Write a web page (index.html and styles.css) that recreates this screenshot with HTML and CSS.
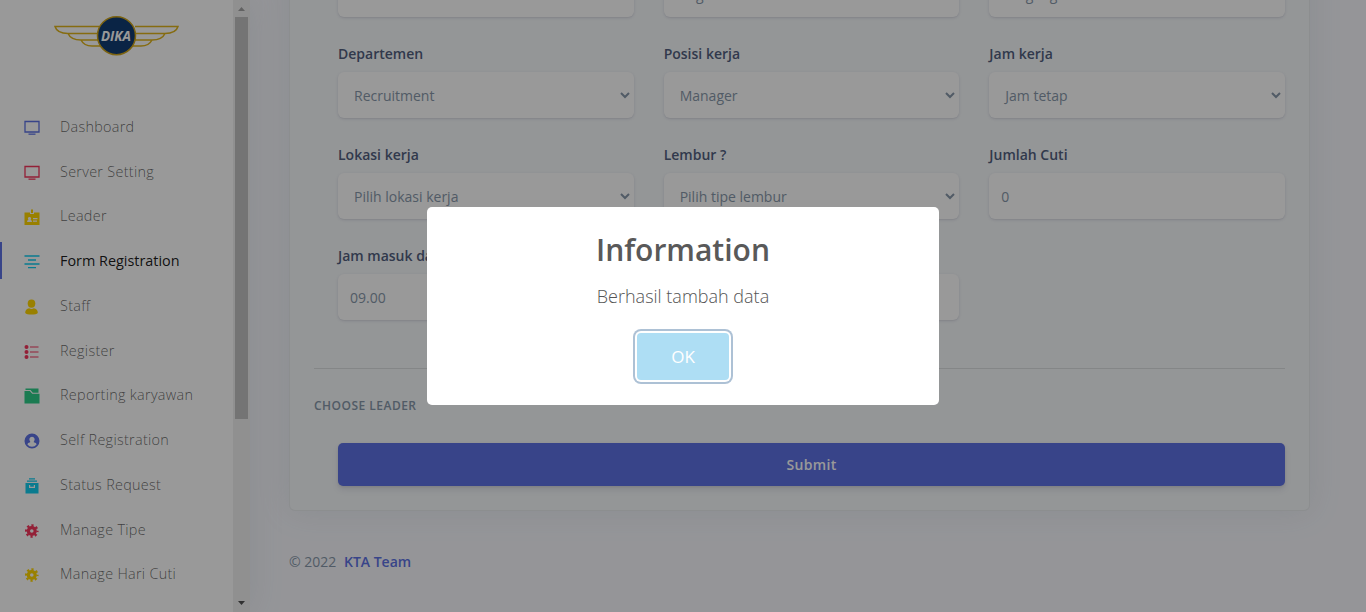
FILE: index.html
```html
<!DOCTYPE html>
<html lang="id">
<head>
<meta charset="utf-8">
<title>Form Registration</title>
<link rel="stylesheet" href="styles.css">
</head>
<body>
<div class="app">
  <aside class="sidebar">
    <div class="side-body">
      <div class="brand">
        <svg width="126" height="42" viewBox="0 0 126 42">
          <g fill="none" stroke="#dfb41c" stroke-width="1.5">
            <path d="M45 11.500H1c1.500 5 5 7 13 7H45M14 18.500c2 4.500 6 6.500 13 6.500H45M27 25c2 4 5 6 11 6h8"/>
            <path d="M81 11.500h43c-1.500 5-5 7-13 7H81M111 18.500c-2 4.500-6 6.500-13 6.500H81M98 25c-2 4-5 6-11 6h-8"/>
          </g>
          <circle cx="62.500" cy="20.700" r="19" fill="#123c73" stroke="#cfa51b" stroke-width="1.500"/>
          <text class="brand-text" x="62" y="26" text-anchor="middle" textLength="30" lengthAdjust="spacingAndGlyphs">DIKA</text>
        </svg>
      </div>
      <nav class="nav">
        <a class="nav-item"><svg class="ic primary" viewBox="0 0 16 16"><path class="line" d="M1 1.500h14v10.500H1z"/><path d="M4.500 13.500h7v1.300h-7z"/></svg><span>Dashboard</span></a>
        <a class="nav-item"><svg class="ic red" viewBox="0 0 16 16"><path class="line" d="M1 1.500h14v10.500H1z"/><path d="M4.500 13.500h7v1.300h-7z"/></svg><span>Server Setting</span></a>
        <a class="nav-item"><svg class="ic yellow" viewBox="0 0 16 16"><path fill-rule="evenodd" d="M.5 3.500H6V5h4V3.500h5.500V16H.5zM5.500 8a1.500 1.500 0 0 0-1 2.700Q3 11.300 3 13h5q0-1.700-1.500-2.300A1.500 1.500 0 0 0 5.500 8zM9 9v1.200h4.500V9zm0 2.500v1.200h4v-1.200z"/><path d="M7 .5h2V4H7z"/></svg><span>Leader</span></a>
        <a class="nav-item active"><svg class="ic info" viewBox="0 0 16 16"><path class="line" d="M.5 2h15M4 6h8M.5 10h15M4 13.700h8"/></svg><span>Form Registration</span></a>
        <a class="nav-item"><svg class="ic yellow" viewBox="0 0 16 16"><ellipse cx="7.500" cy="4.600" rx="3.800" ry="4.200"/><path d="M1.200 14c0-3 1.500-4.500 4-4.800q2.300 1.500 4.600 0c2.500.3 4 1.800 4 4.800q-1.500 1.500-6.300 1.500T1.200 14z"/></svg><span>Staff</span></a>
        <a class="nav-item"><svg class="ic red" viewBox="0 0 16 16"><circle cx="2.500" cy="3" r="2"/><circle cx="2.500" cy="8" r="2"/><circle cx="2.500" cy="13" r="2"/><path d="M6 2.400h8.500v1.200H6zM6 7.400h8.500v1.200H6zM6 12.400h8.500v1.200H6z"/></svg><span>Register</span></a>
        <a class="nav-item"><svg class="ic green" viewBox="0 0 16 16"><path d="M.5 3h5.300l2.400 2.800h7.300v9.700H.5z"/><path d="M1.500.5h13v4.200H8.800L6.500 2H1.500z"/></svg><span>Reporting karyawan</span></a>
        <a class="nav-item"><svg class="ic primary" viewBox="0 0 16 16"><path fill-rule="evenodd" d="M8 .5a7.500 7.500 0 1 0 0 15A7.500 7.500 0 0 0 8 .5zm0 3.200a2.700 2.700 0 0 1 1.800 4.700v.8q2.500.5 2.900 2Q11 13.700 8 13.700T3.300 11.200q.4-1.500 2.900-2v-.8A2.700 2.700 0 0 1 8 3.700z"/></svg><span>Self Registration</span></a>
        <a class="nav-item"><svg class="ic info" viewBox="0 0 16 16"><path d="M5 .3h6v1.200H5zM3 2.500h10v1.200H3z"/><path fill-rule="evenodd" d="M1.500 5h13v10.500h-13zM5 7v3h6V7H9.800v1.800H6.200V7z"/></svg><span>Status Request</span></a>
        <a class="nav-item"><svg class="ic red" viewBox="0 0 16 16"><circle class="ring" cx="7.800" cy="8" r="3.400"/><circle class="teeth" cx="7.800" cy="8" r="5.600"/></svg><span>Manage Tipe</span></a>
        <a class="nav-item"><svg class="ic yellow" viewBox="0 0 16 16"><circle class="ring" cx="7.800" cy="8" r="3.400"/><circle class="teeth" cx="7.800" cy="8" r="5.600"/></svg><span>Manage Hari Cuti</span></a>
      </nav>
    </div>
    <div class="scrollbar">
      <svg class="arrow dim" viewBox="0 0 7 4"><path d="M0 4L3.500 0 7 4z"/></svg>
      <div class="thumb"></div>
      <svg class="arrow" viewBox="0 0 7 4"><path d="M0 0h7L3.500 4z"/></svg>
    </div>
  </aside>

  <main class="main">
    <section class="card">
      <div class="grid">
        <div class="field"><div class="control"></div></div>
        <div class="field"><div class="control select">Pegawai</div></div>
        <div class="field"><div class="control select">Magang</div></div>

        <div class="field"><label>Departemen</label><div class="control select">Recruitment<svg class="chev" viewBox="0 0 10 7"><path d="M1 1l4 4 4-4"/></svg></div></div>
        <div class="field"><label>Posisi kerja</label><div class="control select">Manager<svg class="chev" viewBox="0 0 10 7"><path d="M1 1l4 4 4-4"/></svg></div></div>
        <div class="field"><label>Jam kerja</label><div class="control select">Jam tetap<svg class="chev" viewBox="0 0 10 7"><path d="M1 1l4 4 4-4"/></svg></div></div>

        <div class="field"><label>Lokasi kerja</label><div class="control select">Pilih lokasi kerja<svg class="chev" viewBox="0 0 10 7"><path d="M1 1l4 4 4-4"/></svg></div></div>
        <div class="field"><label>Lembur ?</label><div class="control select">Pilih tipe lembur<svg class="chev" viewBox="0 0 10 7"><path d="M1 1l4 4 4-4"/></svg></div></div>
        <div class="field"><label>Jumlah Cuti</label><div class="control">0</div></div>

        <div class="field"><label>Jam masuk dan</label><div class="control">09.00</div></div>
        <div class="field"><div class="control"></div></div>
      </div>
      <hr class="rule">
      <h6 class="section-title">Choose Leader</h6>
      <div class="submit">Submit</div>
    </section>
    <footer class="footer">© 2022 <a>KTA Team</a></footer>
  </main>
</div>

<div class="overlay">
  <div class="modal">
    <h2 class="modal-title">Information</h2>
    <p class="modal-text">Berhasil tambah data</p>
    <div class="ok">OK</div>
  </div>
</div>
</body>
</html>
```
FILE: styles.css
```css
* { box-sizing: border-box; }
body {
  margin: 0;
  height: 612px;
  overflow: hidden;
  background: #f8f9fe;
  font-family: "Open Sans", "Noto Sans", sans-serif;
  font-size: 14px;
  color: #525f7f;
}
.app { display: flex; height: 612px; }

.sidebar {
  display: flex;
  width: 250px;
  flex: none;
  background: #fff;
  box-shadow: 0 0 32px rgba(136, 152, 170, .15);
}
.side-body { flex: 1; }
.brand { height: 104px; padding: 15px 0 0 54px; }
.brand svg { display: block; }
.brand-text { fill: #fff; font: italic 700 14.5px "Open Sans", sans-serif; }
.nav-item {
  display: flex;
  align-items: center;
  height: 44.75px;
  padding-left: 23.5px;
  font-size: 14.4px;
  font-weight: 300;
  letter-spacing: .3px;
  color: rgba(0, 0, 0, .6);
}
.nav-item.active {
  color: rgba(0, 0, 0, .9);
  font-weight: 400;
  letter-spacing: 0;
  background: linear-gradient(#5e72e4, #5e72e4) left center / 2px 37px no-repeat;
}
.ic { width: 16px; height: 16px; margin: 3px 20.5px 0 0; fill: currentColor; }
.ic .line { fill: none; stroke: currentColor; stroke-width: 1.3; }
.ring { fill: none; stroke: currentColor; stroke-width: 3.2; }
.teeth { fill: none; stroke: currentColor; stroke-width: 2.4; stroke-dasharray: 2.2 2.2; stroke-dashoffset: 1.1; }
.primary { color: #5e72e4; }
.red { color: #f5365c; }
.yellow { color: #ffd600; }
.info { color: #11cdef; }
.green { color: #2dce89; }

.scrollbar {
  display: flex;
  flex-direction: column;
  align-items: center;
  width: 17px;
  padding: 7px 0;
  background: #f1f1f1;
}
.arrow { width: 7px; height: 4px; fill: #505050; }
.arrow.dim { fill: #a3a3a3; }
.thumb { width: 13px; height: 402px; margin: 6px 0 auto; background: #c1c1c1; }

.main {
  flex: 1;
  display: flex;
  flex-direction: column;
  justify-content: flex-end;
  height: 612px;
  padding: 0 56px 0 39px;
}
.card {
  flex: none;
  padding: 24px;
  border: 1px solid rgba(0, 0, 0, .05);
  border-radius: 6px;
  background: #f7fafc;
  box-shadow: 0 0 32px rgba(136, 152, 170, .15);
}
.grid {
  display: grid;
  grid-template-columns: repeat(3, 1fr);
  gap: 26px 30px;
  padding: 0 0 0 24px;
}
.field { display: flex; flex-direction: column; justify-content: flex-end; height: 75px; }
.field label {
  display: block;
  height: 21px;
  margin-bottom: 8px;
  line-height: 21px;
  font-weight: 600;
}
.control {
  display: flex;
  align-items: center;
  height: 46px;
  padding: 0 12px;
  border-radius: 6px;
  background: #fff;
  color: #8898aa;
  box-shadow: 0 1px 3px rgba(50, 50, 93, .15), 0 1px 0 rgba(0, 0, 0, .02);
}
.control.select { padding: 0 4px 0 16px; }
.chev {
  width: 10px;
  height: 7px;
  margin: 0 0 0 auto;
  fill: none;
  stroke: #8898aa;
  stroke-width: 2;
}
.rule { height: 1px; margin: 48px 0 28px; border: 0; background: rgba(0, 0, 0, .1); }
.section-title {
  height: 18px;
  margin: 0 0 28px;
  line-height: 18px;
  font-size: 12px;
  font-weight: 600;
  letter-spacing: .48px;
  text-transform: uppercase;
  color: #8898aa;
}
.submit {
  height: 43px;
  margin-left: 24px;
  border-radius: 5px;
  background: #5e72e4;
  color: #fff;
  line-height: 43px;
  text-align: center;
  font-weight: 600;
  letter-spacing: .35px;
  box-shadow: 0 4px 6px rgba(50, 50, 93, .11), 0 1px 3px rgba(0, 0, 0, .08);
}
.footer { flex: none; height: 101px; padding-top: 40px; line-height: 21px; color: #8898aa; }
.footer a { margin-left: 4px; color: #5e72e4; font-weight: 600; }

.overlay {
  position: fixed;
  inset: 0;
  display: flex;
  align-items: center;
  justify-content: center;
  background: rgba(0, 0, 0, .4);
}
.modal {
  display: flex;
  flex-direction: column;
  align-items: center;
  width: 512px;
  height: 198px;
  padding-top: 20px;
  border-radius: 5px;
  background: #fff;
}
.modal-title { margin: 0; line-height: 46px; font-size: 30px; font-weight: 600; color: #595959; }
.modal-text { margin: 10px 0 0; line-height: 27px; font-size: 18px; font-weight: 300; color: #545454; }
.ok {
  width: 92px;
  height: 47px;
  margin-top: 23px;
  border-radius: 4px;
  background: #aedef4;
  color: #fff;
  font-size: 17px;
  line-height: 47px;
  text-align: center;
  box-shadow: 0 0 0 2px #fff, 0 0 0 4px rgba(50, 100, 150, .4);
}
```
